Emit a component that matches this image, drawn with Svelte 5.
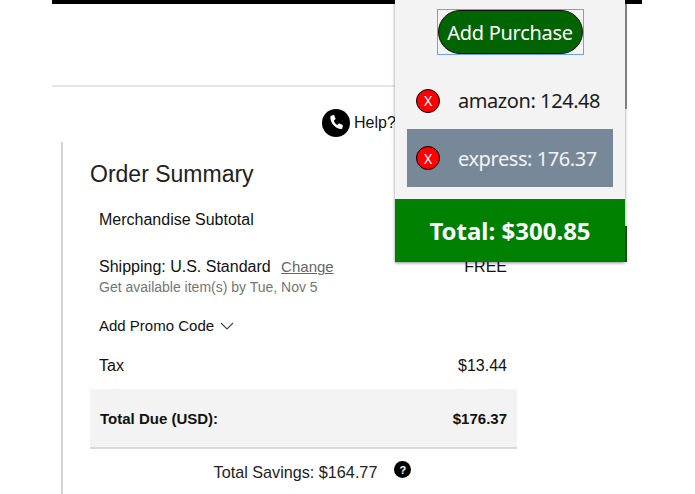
<script>
	const purchases = [
		{ name: 'amazon', amount: '124.48', selected: false },
		{ name: 'express', amount: '176.37', selected: true }
	];
</script>

<div class="page">
	<div class="topbar"></div>
	<div class="header"></div>

	<div class="help">
		<span class="phone">
			<svg viewBox="0 0 28 28" width="28" height="28" aria-hidden="true">
				<circle cx="14" cy="14" r="14" fill="#000" />
				<path
					d="M9.200 6.800l2.200-.8c.4-.1.700 0 .9.400l1.200 3.100c.1.300 0 .6-.2.800l-1.500 1.400c.7 1.900 1.800 3.200 3.300 4.200l1.700-1.300c.2-.2.500-.2.800-.1l2.900 1.600c.3.200.5.500.4.900l-.6 2.200c-.1.400-.4.700-.8.700C13.600 20 8.300 14.400 8.300 8c0-.6.400-1 .9-1.200z"
					fill="#fff"
				/>
			</svg>
		</span>
		<span>Help?</span>
	</div>

	<section class="summary">
		<h2>Order Summary</h2>

		<div class="row merch">
			<span>Merchandise Subtotal</span>
		</div>

		<div class="row shipping">
			<div>
				<div>Shipping: U.S. Standard <a href="#change" class="change">Change</a></div>
				<div class="note">Get available item(s) by Tue, Nov 5</div>
			</div>
			<span class="free">FREE</span>
		</div>

		<div class="promo">
			Add Promo Code
			<svg viewBox="0 0 14 8" width="14" height="8" aria-hidden="true">
				<path d="M1 1l6 6 6-6" fill="none" stroke="#444" stroke-width="1.1" />
			</svg>
		</div>

		<div class="row tax">
			<span>Tax</span>
			<span>$13.44</span>
		</div>

		<div class="row due">
			<span>Total Due (USD):</span>
			<span>$176.37</span>
		</div>

		<div class="savings">
			<span>Total Savings: $164.77</span>
			<span class="qmark">?</span>
		</div>
	</section>

	<aside class="panel">
		<div class="add-wrap">
			<span class="focus-ring">
				<button class="add">Add Purchase</button>
			</span>
		</div>
		<ul>
			{#each purchases as p}
				<li class:selected={p.selected}>
					<span class="remove">X</span>
					<span>{p.name}: {p.amount}</span>
				</li>
			{/each}
		</ul>
		<div class="total">Total: $300.85</div>
		<span class="edge edge-top"></span>
		<span class="edge edge-bottom"></span>
	</aside>
</div>

<style>
	:global(body) {
		margin: 0;
		background: #fff;
	}

	.page {
		position: relative;
		height: 494px;
		overflow: hidden;
		font-family: 'Liberation Sans', Arial, sans-serif;
		font-size: 16px;
		color: #111;
	}

	.topbar {
		margin-left: 52px;
		width: 590px;
		height: 4px;
		background: #000;
	}

	.header {
		margin-left: 52px;
		width: 574px;
		height: 81px;
		border-bottom: 2px solid #e6e6e6;
	}

	.help {
		display: flex;
		align-items: center;
		gap: 4px;
		margin: 22px 0 0 322px;
		height: 28px;
	}

	.phone {
		display: block;
		height: 28px;
	}

	.summary {
		width: 427px;
		margin: 5px 0 0 61px;
		height: 352px;
		padding-left: 27px;
		border-left: 2px solid #d4d4d4;
	}

	h2 {
		margin: 0;
		padding-top: 18px;
		font-size: 23px;
		font-weight: 400;
		line-height: 28px;
		color: #222;
	}

	.row {
		display: flex;
		justify-content: space-between;
		padding: 0 10px 0 9px;
	}

	.merch {
		margin-top: 22px;
		line-height: 20px;
	}

	.shipping {
		margin-top: 27px;
		line-height: 20px;
	}

	.change {
		margin-left: 6px;
		color: #666;
		font-size: 15px;
	}

	.note {
		margin-top: 2px;
		font-size: 14px;
		line-height: 16px;
		color: #757575;
	}

	.promo {
		display: flex;
		align-items: center;
		gap: 6px;
		margin-top: 21px;
		padding-left: 9px;
		font-size: 15px;
		line-height: 20px;
	}

	.tax {
		margin-top: 20px;
		line-height: 20px;
	}

	.due {
		align-items: center;
		margin-top: 13px;
		height: 58px;
		padding-left: 10px;
		border-bottom: 2px solid #d9d9d9;
		background: #f3f3f3;
		font-size: 15px;
		font-weight: 700;
	}

	.savings {
		display: flex;
		justify-content: center;
		align-items: flex-start;
		gap: 17px;
		padding-top: 13px;
		padding-left: 18px;
		font-size: 16.2px;
		line-height: 20px;
		color: #222;
	}

	.qmark {
		display: flex;
		justify-content: center;
		align-items: center;
		width: 17px;
		height: 17px;
		margin-top: -1px;
		border-radius: 50%;
		background: #000;
		color: #fff;
		font-size: 11px;
		font-weight: 700;
	}

	.panel {
		position: absolute;
		top: 0;
		left: 395px;
		width: 230px;
		height: 262px;
		display: flex;
		flex-direction: column;
		background: #f3f3f3;
		box-shadow: 0 1px 3px rgba(0, 0, 0, 0.45);
		font-family: 'Noto Sans', 'Open Sans', sans-serif;
		font-size: 20px;
		letter-spacing: -0.43px;
	}

	.add-wrap {
		display: flex;
		justify-content: center;
		padding-top: 9px;
	}

	.focus-ring {
		display: block;
		height: 44px;
		border: 1px solid #6f9ff0;
	}

	.add {
		display: block;
		width: 145px;
		height: 44px;
		padding: 1px 0 0;
		border: 1.5px solid #111;
		border-radius: 22px;
		background: #006400;
		color: #fff;
		font: inherit;
		letter-spacing: -0.3px;
	}

	ul {
		flex: 1;
		margin: 0;
		padding: 0;
		list-style: none;
	}

	li {
		display: flex;
		align-items: center;
		gap: 18px;
		height: 58px;
		margin: 0 12px;
		padding-left: 9px;
		color: #1c1c1c;
	}

	li:first-child {
		height: 57px;
		margin-top: 17px;
	}

	li.selected {
		background: #778899;
		color: #f3f3f3;
	}

	.remove {
		display: flex;
		justify-content: center;
		align-items: center;
		width: 22px;
		height: 22px;
		border: 1.5px solid #000;
		border-radius: 50%;
		background: #f00;
		color: #fff;
		font-size: 14px;
		letter-spacing: 0;
	}

	.total {
		height: 63px;
		line-height: 64px;
		background: #008000;
		color: #fff;
		font-size: 24px;
		font-weight: 700;
		letter-spacing: 0;
		text-align: center;
	}

	.edge {
		position: absolute;
		right: -2px;
		width: 2px;
	}

	.edge-top {
		top: 4px;
		height: 105px;
		background: #808080;
	}

	.edge-bottom {
		top: 226px;
		height: 36px;
		background: #0c4f0c;
	}
</style>
